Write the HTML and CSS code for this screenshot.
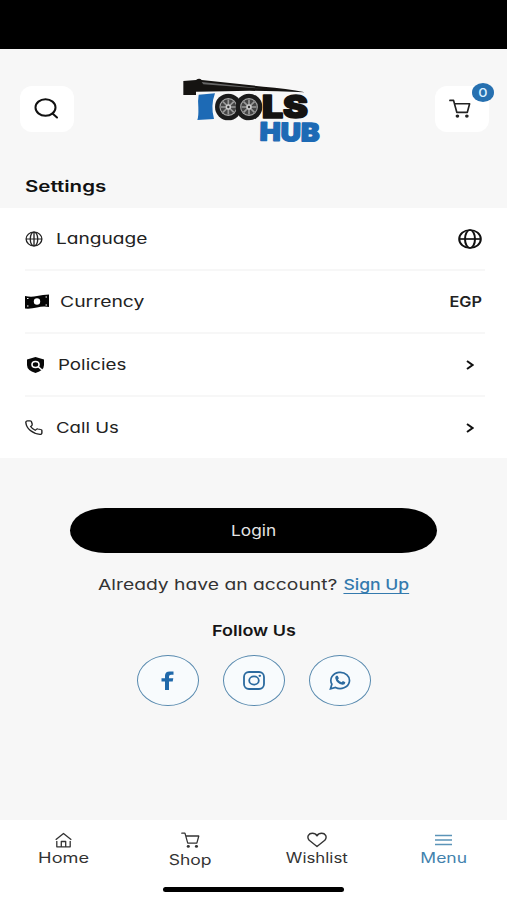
FILE: index.html
```html
<!DOCTYPE html>
<html lang="en">
<head>
<meta charset="utf-8">
<title>Tools Hub - Settings</title>
<link rel="stylesheet" href="styles.css">
</head>
<body>
<svg class="defs" aria-hidden="true">
  <symbol id="globe" viewBox="0 0 24 24" preserveAspectRatio="none"><g fill="none" stroke="currentColor"><circle cx="12" cy="12" r="10.5"/><ellipse cx="12" cy="12" rx="5" ry="10.5"/><path d="M12 1.500v21M1.500 12h21"/></g></symbol>
  <symbol id="globe-bold" viewBox="0 0 24 24" preserveAspectRatio="none"><g fill="none" stroke="currentColor"><circle cx="12" cy="12" r="10.800"/><ellipse cx="12" cy="12" rx="5" ry="10.800"/><path d="M1.200 12h21.600"/></g></symbol>
  <symbol id="cart" viewBox="0 0 24 20" preserveAspectRatio="none"><path d="M1 1.500h4l3.500 12.500h11.500l2.500-9H6.200" fill="none" stroke="currentColor" stroke-linejoin="round" stroke-linecap="round"/><ellipse cx="9.200" cy="18" rx="2" ry="1.700" fill="currentColor"/><ellipse cx="19.500" cy="18" rx="2" ry="1.700" fill="currentColor"/></symbol>
  <symbol id="wheel" viewBox="0 0 80 80"><circle cx="40" cy="40" r="39" fill="#1b1b1b"/><circle cx="40" cy="40" r="26" fill="#aaa"/><circle cx="40" cy="40" r="23" fill="#444"/><path d="M40 40V18M40 40l16-16M40 40h22M40 40l16 16M40 40v22M40 40L24 56M40 40H18M40 40L24 24" stroke="#999" stroke-width="5"/><circle cx="40" cy="40" r="8" fill="#ccc"/><circle cx="40" cy="40" r="3.500" fill="#333"/></symbol>
</svg>
<div class="status"></div>
<header class="header">
  <button class="tile" aria-label="Search"><svg class="search" viewBox="0 0 25 21"><g fill="none" stroke="#111" stroke-width="2" stroke-linecap="round"><ellipse cx="11.500" cy="9.500" rx="10" ry="8.300"/><path d="M18.500 15.500l4.500 4"/></g></svg></button>
  <svg class="logo" viewBox="0 0 495 270" role="img">
    <path d="M40 48l38-3q10-8 17 0l185 20q70 5 125 17-150-7-240-3l-87 1v10H40z" fill="#151311"/>
    <path d="M95 51l185 20-180-13z" fill="#666"/>
    <path d="M86 89l49-4q-14 38-3 77l-50 3q4-10 3-38-2-20 1-38z" fill="#1d6ab5"/>
    <use href="#wheel" x="134" y="85" width="82" height="82"/>
    <use href="#wheel" x="196" y="85" width="82" height="82"/>
    <g font-family="Inter, sans-serif" font-weight="900" stroke-linejoin="round">
      <text x="276" y="160" font-size="93" fill="#151311" stroke="#151311" stroke-width="5" textLength="138" lengthAdjust="spacingAndGlyphs">LS</text>
      <text x="269" y="228" font-size="76" fill="#1d6ab5" stroke="#1d6ab5" stroke-width="4" textLength="180" lengthAdjust="spacingAndGlyphs" transform="rotate(1 350 200)">HUB</text>
    </g>
  </svg>
  <button class="tile" aria-label="Cart"><svg class="cart-big"><use href="#cart"/></svg><span class="badge"><span class="t">0</span></span></button>
</header>
<main>
  <h1 class="title"><span class="t">Settings</span></h1>
  <ul class="list">
    <li class="row"><svg class="ico globe"><use href="#globe"/></svg><span class="t label-language">Language</span><svg class="end globe-end"><use href="#globe-bold"/></svg></li>
    <li class="row"><svg class="ico cash" viewBox="0 0 24 15"><path d="M0 2q6 1.500 12 0T24 .5V13q-6-1-12 .500T0 14.500z" fill="#050505"/><ellipse cx="12" cy="7.500" rx="3.200" ry="3.200" fill="#fff"/><path d="M2 4.500h1.500M20.500 3H22M2 12h1.500M20.500 11H22" stroke="#fff"/></svg><span class="t label-currency">Currency</span><span class="end t egp">EGP</span></li>
    <li class="row"><svg class="ico shield" viewBox="0 0 17 16"><path d="M8.500 0L17 2.500V8q0 5.500-8.500 8Q0 13.500 0 8V2.500z" fill="#080808"/><g fill="none" stroke="#fff" stroke-width="1.600"><ellipse cx="8.500" cy="7.500" rx="3.500" ry="3"/><path d="M11 9.500l4 3.500"/></g></svg><span class="t label-policies">Policies</span><svg class="end chev" viewBox="0 0 8 10"><path d="M1 1l5.500 4L1 9" fill="none" stroke="#111" stroke-width="2"/></svg></li>
    <li class="row"><svg class="ico phone" viewBox="0 0 24 24" preserveAspectRatio="none"><path d="M22.500 17.500v3.200a2.200 2.200 0 0 1-2.400 2.200C10 22 2 14 1.100 3.900A2.200 2.200 0 0 1 3.300 1.500h3.500a2 2 0 0 1 2 1.800l.8 3.400a2.200 2.200 0 0 1-.6 2.200L7.500 10.400a17 17 0 0 0 6.100 6.100l1.500-1.500a2.200 2.200 0 0 1 2.200-.6l3.400.8a2 2 0 0 1 1.800 2.300z" fill="none" stroke="#222" stroke-width="1.900"/></svg><span class="t label-call">Call Us</span><svg class="end chev" viewBox="0 0 8 10"><path d="M1 1l5.500 4L1 9" fill="none" stroke="#111" stroke-width="2"/></svg></li>
  </ul>
  <section class="account">
    <button class="login"><span class="t">Login</span></button>
    <p class="signup"><span class="t">Already have an account?</span><a class="t">Sign Up</a></p>
    <h2 class="follow"><span class="t">Follow Us</span></h2>
    <div class="social">
      <a class="circle"><svg class="fb" viewBox="0 0 13 20" preserveAspectRatio="none"><path d="M4 20v-9H.500V7.500H4V5Q4 .5 8.800.5h3.700V4H10Q8 4 8 5.700v1.800h4.300L11.700 11H8v9z" fill="#2069aa"/></svg></a>
      <a class="circle"><svg class="ig" viewBox="0 0 22 19"><g fill="none" stroke="#2b6a9f" stroke-width="1.800"><rect x="1" y="1" width="20" height="17" rx="5"/><ellipse cx="11" cy="9.500" rx="4.800" ry="4.100"/></g><ellipse cx="16.800" cy="4.800" rx="1.300" ry="1.100" fill="#2b6a9f"/></svg></a>
      <a class="circle"><svg class="wa" viewBox="0 0 22 19"><path d="M1.500 17.800l1.400-4.700A9.300 8.100 0 1 1 6.500 16.400z" fill="none" stroke="#2b6a9f" stroke-width="1.700"/><path d="M7.200 4.800l1.500-.1 1.200 2.500-1 1.200q1.500 2.200 3.800 2.900l1.200-1.200 2.500 1.100q-.4 2.600-2.900 2.500Q7.500 12.800 6.200 7q0-1.500 1-2.200z" fill="#2b6a9f"/></svg></a>
    </div>
  </section>
</main>
<nav class="nav">
  <a class="item"><svg class="home" viewBox="0 0 17 15"><g fill="none" stroke="#333" stroke-width="1.300" stroke-linejoin="round"><path d="M.700 7.300L8.500 1l7.800 6.300M1.800 8.500v5.800h13.400V8.500M6.300 14V9h4.400v5"/></g></svg><span class="t n-home">Home</span></a>
  <a class="item shop"><svg class="cart-small"><use href="#cart"/></svg><span class="t n-shop">Shop</span></a>
  <a class="item"><svg class="heart" viewBox="0 0 20 15"><path d="M10 14L2.200 7.800C-.8 4 2 .8 5.300.8 8 .8 9.300 2 10 3.300 10.700 2 12 .8 14.700.8 18 .8 20.800 4 17.800 7.800z" fill="none" stroke="#333" stroke-width="1.400" stroke-linejoin="round"/></svg><span class="t n-wish">Wishlist</span></a>
  <a class="item active"><svg class="burger" viewBox="0 0 17 11"><path d="M0 1h17M0 5.500h17M0 10h17" stroke="#5b94b8" stroke-width="1.600"/></svg><span class="t n-menu">Menu</span></a>
</nav>
<footer class="indicator"><div class="bar"></div></footer>
</body>
</html>
```
FILE: styles.css
```css
* { box-sizing: border-box; }
body { margin: 0; width: 507px; height: 900px; overflow: hidden; display: flex; flex-direction: column; background: #f7f7f7; color: #222; font: 15px/20px Inter, "Open Sans", sans-serif; font-feature-settings: "cv11"; }
button { border: 0; padding: 0; font: inherit; }
.defs { position: absolute; width: 0; height: 0; }
.t { display: inline-block; white-space: nowrap; transform: scaleX(1.2); transform-origin: center; }
.status { height: 49px; background: #000; flex: none; }
.header { height: 119px; padding: 16px 18px 0 20px; display: flex; justify-content: space-between; flex: none; }
.tile { width: 54px; height: 46px; margin-top: 21px; background: #fff; border-radius: 12px; display: flex; align-items: center; justify-content: center; position: relative; }
.search { width: 25px; height: 21px; margin: 0 2px 1px 0; }
.logo { width: 165px; height: 90px; margin-right: 5px; }
.cart-big { width: 22px; height: 19px; color: #222; stroke-width: 1.8; margin: 0 5px 2px 0; }
.badge { position: absolute; left: 37px; top: -3px; width: 22px; height: 19px; border-radius: 50%; background: #2670b0; color: #d9efff; font-size: 12px; line-height: 19px; text-align: center; font-weight: 500; }
.title { margin: 0; height: 40px; padding: 8px 0 0 25px; font-size: 16px; line-height: 20px; font-weight: 600; color: #111; }
.title .t, .row .t { transform-origin: left; }
.title .t { transform: scaleX(1.28); }
.list { list-style: none; margin: 0; padding: 0 22px 0 25px; background: #fff; height: 250px; display: grid; grid-template-rows: 63px 63px 63px 61px; }
.row { display: flex; align-items: center; border-bottom: 2px solid #f7f7f7; }
.row:last-child { border: 0; }
.row .t { padding-top: 1px; }
.row .label-language { transform: scaleX(1.275); }
.row .label-currency { transform: scaleX(1.29); }
.row .label-policies { transform: scaleX(1.25); }
.row .label-call { transform: scaleX(1.24); }
.ico { flex: none; color: #222; }
.globe { width: 18px; height: 16px; margin-right: 13px; stroke-width: 1.8; }
.cash { width: 24px; height: 15px; margin-right: 11px; }
.shield { width: 17px; height: 16px; margin: 0 14px 0 2px; }
.phone { width: 18px; height: 15px; margin-right: 13px; }
.row .end { margin-left: auto; flex: none; }
.globe-end { width: 24px; height: 20px; margin-right: 3px; color: #111; stroke-width: 2; }
.row .egp { transform-origin: right; transform: scaleX(1.16); margin-right: 3px; font-size: 14px; font-weight: 600; }
.chev { width: 8px; height: 10px; margin-right: 11px; }
.account { display: flex; flex-direction: column; align-items: center; padding-top: 50px; }
.login { width: 367px; height: 45px; border-radius: 36px / 23px; background: #000; color: #e5e5e5; }
.login .t { transform: scaleX(1.15); }
.signup { width: 311px; margin: 22px 0 0; display: flex; justify-content: space-between; color: #333; }
.signup .t { transform-origin: left; transform: scaleX(1.285); }
.signup a.t { transform-origin: right; transform: scaleX(1.17); color: #347aae; text-decoration: underline; text-underline-offset: 3px; font-weight: 500; }
.follow { margin: 26px 0 0; font-size: 15px; line-height: 20px; font-weight: 600; color: #151515; }
.social { display: flex; gap: 24px; margin-top: 14px; }
.circle { width: 62px; height: 51px; border: 1.5px solid #5789ae; border-radius: 50%; display: flex; align-items: center; justify-content: center; background: #f8fbfd; }
.fb { width: 13px; height: 19px; }
.ig, .wa { width: 22px; height: 19px; }
.nav { margin-top: auto; height: 60px; background: #fff; display: grid; grid-template-columns: repeat(4, 1fr); flex: none; }
.item { display: flex; flex-direction: column; align-items: center; padding-top: 12px; color: #333; font-size: 14px; font-weight: 400; }
.item svg { height: 16px; }
.item .t { line-height: 20px; }
.item .n-home { transform: scaleX(1.3); }
.item .n-shop { transform: scaleX(1.25); }
.item .n-menu { transform: scaleX(1.25); }
.home { width: 17px; }
.cart-small { width: 19px; color: #333; stroke-width: 1.6; }
.shop .t { margin-top: 2px; }
.heart { width: 20px; }
.burger { width: 17px; }
.active { color: #4382ad; }
.indicator { height: 20px; background: #fff; flex: none; display: flex; justify-content: center; padding-top: 7px; }
.bar { width: 181px; height: 5px; border-radius: 3px; background: #000; }
```
